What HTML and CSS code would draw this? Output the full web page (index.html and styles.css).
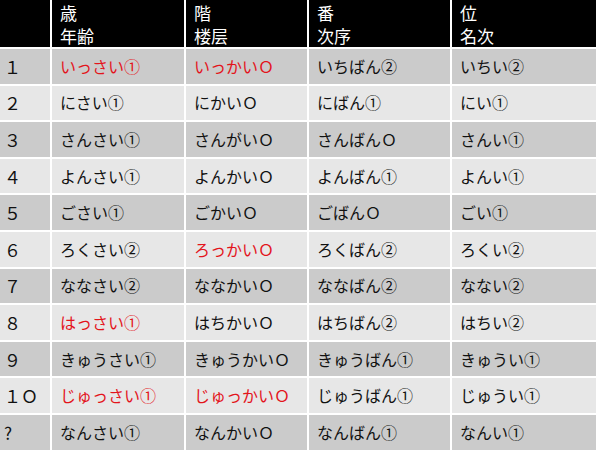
FILE: index.html
```html
<!DOCTYPE html>
<html lang="ja">
<head>
<meta charset="utf-8">
<link rel="stylesheet" href="styles.css">
</head>
<body>
<table class="grid">
  <colgroup>
    <col class="c1"><col class="c2"><col class="c3"><col class="c4"><col class="c5">
  </colgroup>
  <thead>
    <tr class="head">
      <th class="num"></th>
      <th>歳<br>年齢</th>
      <th>階<br>楼层</th>
      <th>番<br>次序</th>
      <th>位<br>名次</th>
    </tr>
  </thead>
  <tbody>
    <tr class="dark"><td class="num">１</td><td class="red">いっさい①</td><td class="red">いっかいＯ</td><td>いちばん②</td><td>いちい②</td></tr>
    <tr class="light"><td class="num">２</td><td>にさい①</td><td>にかいＯ</td><td>にばん①</td><td>にい①</td></tr>
    <tr class="dark"><td class="num">３</td><td>さんさい①</td><td>さんがいＯ</td><td>さんばんＯ</td><td>さんい①</td></tr>
    <tr class="light"><td class="num">４</td><td>よんさい①</td><td>よんかいＯ</td><td>よんばん①</td><td>よんい①</td></tr>
    <tr class="dark"><td class="num">５</td><td>ごさい①</td><td>ごかいＯ</td><td>ごばんＯ</td><td>ごい①</td></tr>
    <tr class="light"><td class="num">６</td><td>ろくさい②</td><td class="red">ろっかいＯ</td><td>ろくばん②</td><td>ろくい②</td></tr>
    <tr class="dark"><td class="num">７</td><td>ななさい②</td><td>ななかいＯ</td><td>ななばん②</td><td>なない②</td></tr>
    <tr class="light"><td class="num">８</td><td class="red">はっさい①</td><td>はちかいＯ</td><td>はちばん②</td><td>はちい②</td></tr>
    <tr class="dark"><td class="num">９</td><td>きゅうさい①</td><td>きゅうかいＯ</td><td>きゅうばん①</td><td>きゅうい①</td></tr>
    <tr class="light"><td class="num">１Ｏ</td><td class="red">じゅっさい①</td><td class="red">じゅっかいＯ</td><td>じゅうばん①</td><td>じゅうい①</td></tr>
    <tr class="dark"><td class="num">?</td><td>なんさい①</td><td>なんかいＯ</td><td>なんばん①</td><td>なんい①</td></tr>
  </tbody>
</table>
</body>
</html>
```

FILE: styles.css
```css
html, body {
  margin: 0;
  padding: 0;
  background: #ffffff;
}

.grid {
  width: 596px;
  table-layout: fixed;
  border-collapse: separate;
  border-spacing: 0;
  font-family: "Noto Sans CJK JP", "Noto Sans", sans-serif;
  font-size: 16px;
  color: #111111;
}

.c1 { width: 50px; }
.c2 { width: 134px; }
.c3 { width: 123px; }
.c4 { width: 143px; }
.c5 { width: 146px; }

.grid th,
.grid td {
  padding: 0 4px 0 8px;
  text-align: left;
  vertical-align: middle;
  white-space: nowrap;
  overflow: hidden;
  border-left: 2px solid #ffffff;
}

.grid th:first-child,
.grid td:first-child {
  border-left: none;
}

.grid td.num {
  padding-left: 4px;
  font-size: 17px;
}

.head th {
  height: 47px;
  background: #000000;
  color: #ffffff;
  font-weight: normal;
  font-size: 17px;
  line-height: 23px;
}

.grid tbody td {
  height: 34.6px;
  border-top: 2px solid #ffffff;
  line-height: 21px;
}

.dark td { background: #cbcbcb; }
.light td { background: #e7e7e7; }

.grid td.red { color: #e3141c; }
```
